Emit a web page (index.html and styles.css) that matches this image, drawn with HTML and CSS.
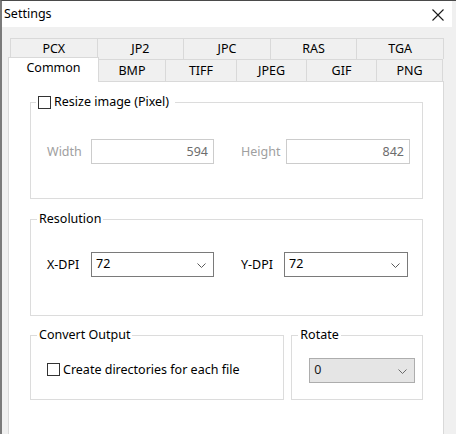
FILE: index.html
```html
<!DOCTYPE html>
<html lang="en">

<head>
    <meta charset="UTF-8">
    <title>Settings</title>
    <link rel="stylesheet" href="styles.css">
</head>

<body>
    <div class="window">
        <div class="titlebar">
            <span class="title">Settings</span>
            <svg class="close" width="12" height="12" viewBox="0 0 12 12">
                <path d="M0.5 0.5 L11.5 11.5 M11.5 0.5 L0.5 11.5" stroke="#1a1a1a" stroke-width="1.1" fill="none" />
            </svg>
        </div>
        <div class="content">
            <div class="tabs">
                <div class="tab-row back">
                    <div class="tab">PCX</div>
                    <div class="tab">JP2</div>
                    <div class="tab">JPC</div>
                    <div class="tab">RAS</div>
                    <div class="tab">TGA</div>
                </div>
                <div class="tab-row front">
                    <div class="tab active w-common">Common</div>
                    <div class="tab w-bmp">BMP</div>
                    <div class="tab w-tiff">TIFF</div>
                    <div class="tab w-jpeg">JPEG</div>
                    <div class="tab w-gif">GIF</div>
                    <div class="tab w-png">PNG</div>
                </div>
            </div>
            <div class="panel">
                <fieldset class="group resize">
                    <legend><span class="check"></span>Resize image (Pixel)</legend>
                    <div class="row">
                        <span class="label disabled lw-width">Width</span>
                        <div class="input">594</div>
                        <span class="label disabled lw-height">Height</span>
                        <div class="input wide">842</div>
                    </div>
                </fieldset>
                <fieldset class="group resolution">
                    <legend>Resolution</legend>
                    <div class="row">
                        <span class="label lw-width">X-DPI</span>
                        <div class="combo">
                            <span>72</span>
                            <svg class="chev" width="9" height="5" viewBox="0 0 9 5"><path d="M0.5 0.5 L4.5 4.5 L8.5 0.5" stroke="#5a5a5a" fill="none" /></svg>
                        </div>
                        <span class="label lw-ydpi">Y-DPI</span>
                        <div class="combo wide">
                            <span>72</span>
                            <svg class="chev" width="9" height="5" viewBox="0 0 9 5"><path d="M0.5 0.5 L4.5 4.5 L8.5 0.5" stroke="#5a5a5a" fill="none" /></svg>
                        </div>
                    </div>
                </fieldset>
                <div class="bottom">
                    <fieldset class="group output">
                        <legend>Convert Output</legend>
                        <div class="check-row"><span class="check"></span>Create directories for each file</div>
                    </fieldset>
                    <fieldset class="group rotate">
                        <legend>Rotate</legend>
                        <div class="combo disabled-combo">
                            <span>0</span>
                            <svg class="chev" width="9" height="5" viewBox="0 0 9 5"><path d="M0.5 0.5 L4.5 4.5 L8.5 0.5" stroke="#6a6a6a" fill="none" /></svg>
                        </div>
                    </fieldset>
                </div>
            </div>
        </div>
    </div>
</body>

</html>
```

FILE: styles.css
```css
* {
    box-sizing: border-box;
}

body {
    margin: 0;
    background-color: #f0f0f0;
    font-family: "Noto Sans", "Open Sans", sans-serif;
    font-size: 12.5px;
    color: #000;
}

.window {
    width: 456px;
    height: 434px;
    overflow: hidden;
    border-top: 1px solid #4a4a4a;
    border-left: 2px solid #7a7a7a;
    background-color: #f0f0f0;
}

.titlebar {
    height: 26px;
    background-color: #fff;
    display: flex;
    align-items: center;
    justify-content: space-between;
    padding: 0 8px 0 2px;
    margin-right: 4px;
}

.title {
    font-size: 12.5px;
    padding-bottom: 2px;
}

.close {
    margin-top: 1px;
}

.content {
    padding: 11px 12px 0 6px;
}

/* tabs */
.tab-row {
    display: flex;
}

.tab-row.back {
    margin-left: 2px;
    height: 21px;
}

.tab-row.front {
    height: 22px;
    align-items: flex-end;
}

.tab {
    display: flex;
    align-items: center;
    justify-content: center;
    background-color: #f0f0f0;
    border-top: 1px solid #d9d9d9;
    border-right: 1px solid #d9d9d9;
    line-height: 16px;
}

.tab:first-child {
    border-left: 1px solid #d9d9d9;
}

.back .tab {
    flex: 1;
    height: 21px;
}

.front .tab {
    height: 22px;
}

.front .tab.active {
    height: 25px;
    margin-bottom: -1px;
    background-color: #fff;
    position: relative;
    z-index: 1;
    padding-bottom: 4px;
}

.w-common { width: 91px; }
.w-bmp { width: 67px; }
.w-tiff { width: 71px; }
.w-jpeg { width: 70px; }
.w-gif { width: 70px; }
.w-png { width: 66px; }

/* panel */
.panel {
    width: 436px;
    height: 360px;
    background-color: #fff;
    border: 1px solid #d9d9d9;
    border-bottom: none;
    padding: 12px 20px 0 21px;
}

.group {
    margin: 0;
    border: 1px solid #dcdcdc;
    min-width: 0;
}

.group legend {
    padding: 0 2px;
    margin-left: -10px;
    line-height: 16px;
    display: flex;
    align-items: center;
}

.check {
    display: inline-block;
    width: 13px;
    height: 13px;
    border: 1px solid #333;
    background-color: #fff;
    margin-right: 3px;
}

.row {
    display: flex;
    align-items: center;
}

.label {
    flex: none;
}

.label.disabled {
    color: #a0a0a0;
}

.lw-width { width: 44px; }
.lw-height { width: 45px; margin-left: 27px; }
.lw-ydpi { width: 43px; margin-left: 27px; }

.resize {
    padding: 29px 0 34px 16px;
}

.resize legend {
    margin-left: -11px;
    padding: 0 6px 0 2px;
}

.input {
    width: 123px;
    height: 25px;
    border: 1px solid #cccccc;
    text-align: right;
    padding: 3px 5px 0 0;
    color: #6d6d6d;
}

.input.wide {
    width: 124px;
}

.resolution {
    margin-top: 12px;
    padding: 25px 0 38px 16px;
}

.combo {
    width: 123px;
    height: 25px;
    border: 1px solid #7a7a7a;
    display: flex;
    align-items: center;
    justify-content: space-between;
    padding: 0 7px 2px 4px;
}

.combo.wide {
    width: 124px;
}

.chev {
    margin-top: 3px;
}

.bottom {
    display: flex;
    gap: 7px;
    margin-top: 11px;
}

.output {
    width: 255px;
    height: 73px;
    padding: 18px 0 0 16px;
}

.check-row {
    display: flex;
    align-items: center;
}

.rotate {
    width: 132px;
    height: 73px;
    padding: 15px 0 0 17px;
}

.rotate legend {
    margin-left: -11px;
}

.disabled-combo {
    width: 106px;
    background-color: #e5e5e5;
    border-color: #adadad;
    color: #1a1a1a;
}
```
